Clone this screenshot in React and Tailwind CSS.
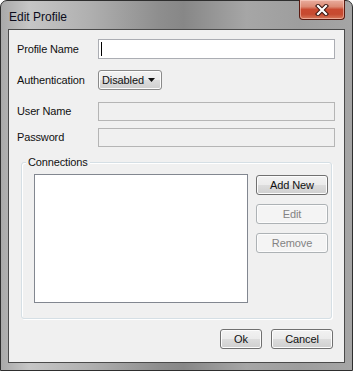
import React from "react";

const Button = ({ children, disabled, className = "" }) => (
  <button
    disabled={disabled}
    className={
      "h-[20px] rounded-[3px] border text-[11px] tracking-[-0.1px] leading-none shadow-[inset_0_0_0_1px_#fcfcfc] " +
      (disabled
        ? "border-[#adb2b5] bg-[#f4f4f4] text-[#838383] "
        : "border-[#707070] bg-[linear-gradient(to_bottom,#f2f2f2_0%,#ebebeb_50%,#dddddd_50%,#cfcfcf_100%)] text-[#111] ") +
      className
    }
  >
    {children}
  </button>
);

const Field = ({ label, disabled, cursor, className = "" }) => (
  <div className={"flex items-center " + className}>
    <span className="w-[81px] text-[11px] tracking-[-0.15px] text-[#111]">{label}</span>
    <div
      className={
        "flex-1 border " +
        (disabled
          ? "h-[19px] border-[#b5b5b5] bg-[#f0f0f0]"
          : "h-[20px] border-[#abadb3] bg-white flex items-center pl-[2px]")
      }
    >
      {cursor && <div className="w-[1px] h-[14px] bg-black" />}
    </div>
  </div>
);

export default function App() {
  return (
    <div className="font-['Liberation_Sans',sans-serif] w-[353px] h-[371px] relative flex flex-col rounded-t-[7px] border border-[#2e2e2e] px-[7px] pb-[7px] bg-[linear-gradient(to_right,#a9a9a9_0%,#c6c6c6_8%,#b0b0b0_25%,#8e8e8e_45%,#878787_52%,#a6a6a6_70%,#9e9e9e_85%,#a5a5a5_100%)]">
      {/* title bar */}
      <div className="h-[28px] flex justify-between items-start">
        <span className="mt-[7px] pl-[1px] text-[12px] text-[#0c0c1c]">Edit Profile</span>
        <div className="-mt-[1px] w-[46px] h-[20px] rounded-b-[4px] border border-[#5a1a10] border-t-0 flex items-center justify-center bg-[linear-gradient(to_bottom,#e9ad9e_0%,#dc8a74_35%,#c94a31_50%,#c64a30_75%,#d6795c_100%)] shadow-[inset_0_0_0_1px_rgba(255,220,210,0.5)]">
          <svg width="14" height="12" viewBox="0 0 14 12">
            <path d="M3 2 L11 10 M11 2 L3 10" stroke="#3a1510" strokeWidth="4.2" strokeLinecap="square" />
            <path d="M3 2 L11 10 M11 2 L3 10" stroke="#fff" strokeWidth="2.2" strokeLinecap="square" />
          </svg>
        </div>
      </div>

      {/* client area */}
      <div className="flex-1 flex flex-col border border-[#4a4a4a] bg-[#f0f0f0] pl-[8px] pr-[9px] pt-[9px]">
        <Field label="Profile Name" cursor />

        <div className="flex items-center mt-[11px]">
          <span className="w-[81px] text-[11px] tracking-[-0.15px] text-[#111]">Authentication</span>
          <div className="w-[64px] h-[20px] flex items-center justify-between pl-[3px] pr-[6px] rounded-[3px] border border-[#8a8a8a] shadow-[inset_0_0_0_1px_#fcfcfc] bg-[linear-gradient(to_bottom,#f2f2f2_0%,#ebebeb_50%,#dddddd_50%,#cfcfcf_100%)]">
            <span className="text-[11px] tracking-[-0.1px] text-[#111]">Disabled</span>
            <svg width="7" height="4" viewBox="0 0 7 4">
              <path d="M0 0 H7 L3.5 4 Z" fill="#111" />
            </svg>
          </div>
        </div>

        <Field label="User Name" disabled className="mt-[12px]" />
        <Field label="Password" disabled className="mt-[7px]" />

        {/* Connections group */}
        <div className="relative mt-[15px] ml-[4px] mr-[3px] h-[157px] rounded-[3px] border border-[#d5dfe5] shadow-[inset_1px_1px_0_#fff,1px_1px_0_#fff] flex gap-[8px] pl-[12px] pt-[11px]">
          <span className="absolute -top-[8px] left-[4px] px-[2px] bg-[#f0f0f0] text-[11px] tracking-[-0.15px] text-[#111] leading-[15px]">
            Connections
          </span>
          <div className="w-[214px] h-[129px] border border-[#828790] bg-white" />
          <div className="w-[72px] flex flex-col gap-[9px] pt-[1px]">
            <Button>Add New</Button>
            <Button disabled>Edit</Button>
            <Button disabled>Remove</Button>
          </div>
        </div>

        <div className="mt-[10px] mr-[2px] flex justify-end gap-[9px]">
          <Button className="w-[42px]">Ok</Button>
          <Button className="w-[62px]">Cancel</Button>
        </div>
      </div>
    </div>
  );
}
